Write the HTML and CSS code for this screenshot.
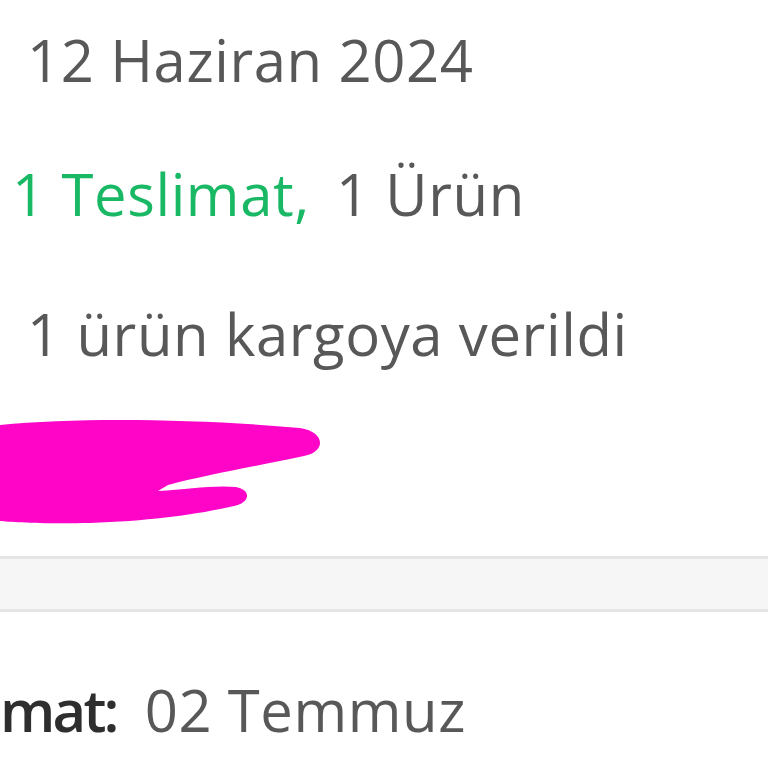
FILE: index.html
```html
<!DOCTYPE html>
<html lang="tr">
<head>
<meta charset="utf-8">
<link rel="stylesheet" href="styles.css">
</head>
<body>
<div class="page">
  <div class="row row-date"><span class="muted">12 Haziran 2024</span></div>
  <div class="row row-count"><span class="green">1 Teslimat,</span><span class="muted">1 Ürün</span></div>
  <div class="row row-status"><span class="muted">1 ürün kargoya verildi</span></div>
  <div class="scribble">
    <svg width="330" height="110" viewBox="0 418 330 110">
      <path fill="#ff05c8" d="M0,425 C80,417 200,419 300,428 C326,432 326,452 304,456 C262,465 205,475 168,485 L158,491 C188,489 214,485 236,487 C252,490 250,503 234,506 C200,514 150,521 90,523 C40,524 10,522 0,521 Z"/>
    </svg>
  </div>
  <div class="band"></div>
  <div class="row row-eta"><span class="label">mat:</span><span class="muted">02 Temmuz</span></div>
</div>
</body>
</html>
```

FILE: styles.css
```css
html, body {
  margin: 0;
  padding: 0;
  background: #ffffff;
}
.page {
  width: 768px;
  height: 768px;
  overflow: hidden;
  font-family: "Open Sans", Lato, sans-serif;
  font-size: 58px;
  letter-spacing: 0.6px;
}
.row {
  display: flex;
  align-items: center;
  gap: 26px;
  white-space: nowrap;
  line-height: 1;
}
.row-date {
  height: 120px;
  padding-left: 27px;
}
.row-count {
  height: 148px;
  padding-left: 12px;
}
.row-status {
  height: 131px;
  padding-left: 27px;
}
.muted { color: #585858; }
.green { color: #19b865; }
.label {
  color: #2e2e2e;
  font-weight: 600;
  letter-spacing: -2.8px;
}
.scribble {
  height: 148px;
  display: flex;
  align-items: center;
}
.scribble svg { display: block; }
.band {
  margin-top: 9px;
  height: 50px;
  background: #f6f6f6;
  border-top: 3px solid #e5e5e5;
  border-bottom: 3px solid #e5e5e5;
}
.row-eta {
  height: 196px;
  gap: 28px;
}
```
